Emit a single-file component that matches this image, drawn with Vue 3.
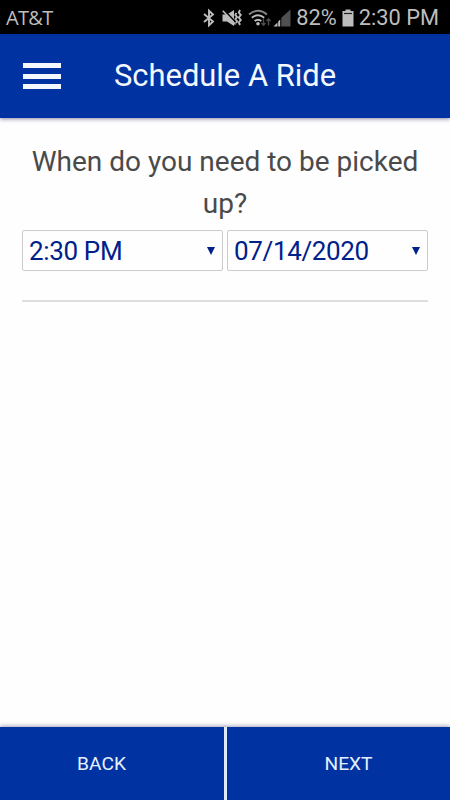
<template>
  <div class="phone">
    <div class="status-bar">
      <span class="carrier">AT&amp;T</span>
      <div class="status-icons">
        <svg class="icon-bt" width="12" height="20" viewBox="0 0 12 20">
          <path d="M1 6 L10 13.5 L6 17.3 V2.7 L10 6.5 L1 14" />
        </svg>
        <svg class="icon-mute" width="20" height="20" viewBox="0 0 20 20">
          <path class="fill" d="M0.5 6.5 H5 L12 2 V18 L5 13.5 H0.5 Z" />
          <path class="slash" d="M2.5 2.5 L14 14.5" />
          <path class="bar" d="M0.8 2.8 L13.5 16.5" />
          <path class="line" d="M14.2 5 L13.4 7 L15 9 L13.4 11 L15 13 L14 15 M18 2 L16.8 4.5 L18.8 7 L16.8 9.5 L18.8 12 L16.8 14.5 L18 17" />
        </svg>
        <svg class="icon-wifi" width="24" height="20" viewBox="0 0 24 20">
          <path class="line soft" d="M1 6.5 Q10 -0.8 19 6.5" />
          <path class="line" d="M3.8 9.8 Q10 4.8 16.2 9.8 M6.6 13 Q10 10.4 13.4 13" />
          <circle cx="10" cy="15.8" r="1.8" />
          <path class="dim" d="M15.5 10.5 V17 M13.5 15 L15.5 17.3 L17.5 15 M20.5 17.5 V10.5 M18.5 13 L20.5 10.7 L22.5 13" />
        </svg>
        <svg class="icon-signal" width="18" height="18" viewBox="0 0 18 18">
          <path class="off" d="M8.3 8.8 L17.5 0.5 V17.5 H8.3 Z" />
          <path class="on" d="M0.5 17.5 L4.5 13.5 V17.5 Z M5.2 12.5 L7.2 10.5 V17.5 H5.2 Z" />
        </svg>
        <span class="percent">82%</span>
        <svg class="icon-battery" width="12" height="18" viewBox="0 0 12 18">
          <path class="body" d="M3.5 0.5 H8.5 V2 H11.5 V17.5 H0.5 V2 H3.5 Z" />
          <path class="level" d="M2 4.5 H10" />
        </svg>
        <span class="clock">{{ time }}</span>
      </div>
    </div>

    <header class="app-bar">
      <button class="menu-btn" aria-label="Menu">
        <span></span>
        <span></span>
        <span></span>
      </button>
      <h1>Schedule A Ride</h1>
    </header>

    <main class="content">
      <h2>When do you need to be picked up?</h2>
      <div class="fields">
        <button v-for="f in fields" :key="f.name" class="field">
          <span>{{ f.value }}</span>
          <svg width="10" height="8" viewBox="0 0 10 8"><path d="M1 0 H9 L5 8 Z" /></svg>
        </button>
      </div>
      <hr />
    </main>

    <footer class="actions">
      <button class="btn-back"><span>BACK</span></button>
      <button class="btn-next"><span>NEXT</span></button>
    </footer>
  </div>
</template>

<script setup>
import { ref, reactive } from 'vue';

const time = ref('2:30 PM');

const fields = reactive([
    { name: 'time', value: '2:30 PM' },
    { name: 'date', value: '07/14/2020' }
]);
</script>

<style>
body { margin: 0; background: #fefefe; }
</style>

<style scoped>
.phone { display: flex; flex-direction: column; height: 800px; width: 450px; overflow: hidden; background: #fefefe; font-family: Roboto, "Liberation Sans", sans-serif; }
button { font-family: inherit; border: none; padding: 0; cursor: pointer; }

.status-bar { display: flex; justify-content: space-between; align-items: center; height: 34px; flex: none; padding: 1px 11px 0 6px; box-sizing: border-box; background: #000; color: #bdbdbd; font-size: 21.8px; white-space: nowrap; }
.carrier { font-family: "Open Sans", "Noto Sans", sans-serif; font-size: 20px; font-weight: 500; letter-spacing: -0.7px; }
.status-icons { display: flex; align-items: center; }
.status-icons svg { flex: none; }
.icon-bt { margin-right: 7px; fill: none; stroke: #bdbdbd; stroke-width: 1.9; }
.icon-mute { margin-right: 6px; }
.fill { fill: #bdbdbd; }
.slash { fill: none; stroke: #000; stroke-width: 1.6; }
.bar { fill: none; stroke: #bdbdbd; stroke-width: 1.6; }
.line { fill: none; stroke: #bdbdbd; stroke-width: 1.9; }
.soft { stroke: #858585; }
.icon-wifi { margin-right: 1px; fill: #bdbdbd; }
.dim { fill: none; stroke: #4c4c4c; stroke-width: 1.4; }
.icon-signal { margin-right: 5px; }
.off { fill: #505050; }
.on { fill: #bdbdbd; }
.percent { margin-right: 5px; }
.icon-battery { margin-right: 5px; }
.body { fill: #bdbdbd; }
.level { stroke: #222; stroke-width: 1.2; }

.app-bar { display: flex; align-items: center; height: 84px; flex: none; padding-left: 23px; background: #0033a1; box-shadow: 0 1px 4px rgba(20,20,80,0.5); }
.menu-btn { display: flex; flex-direction: column; gap: 5.5px; width: 38px; margin-right: 53px; background: none; }
.menu-btn span { height: 5px; background: #f4f8ff; }
h1 { margin: 0 0 1px; font-size: 30.9px; font-weight: 400; color: #f4f8ff; white-space: nowrap; }

.content { flex: 1; padding: 23px 22px 0; }
h2 { margin: 0 0 5px; font-size: 28px; line-height: 42px; font-weight: 400; color: #4a4a4a; text-align: center; }
.fields { display: flex; gap: 4px; }
.field { display: flex; flex: 1; justify-content: space-between; align-items: center; height: 41px; padding: 0 6px; box-sizing: border-box; border: 1px solid #ccc; border-radius: 2px; background: #fefefe; color: #00208a; font-size: 26px; letter-spacing: -0.35px; }
.field svg { fill: #00208a; }
hr { margin: 29px 0 0; border: none; height: 2px; background: #dedede; }

.actions { display: flex; gap: 3px; height: 73px; flex: none; background: #dfe8f8; box-shadow: 0 -1px 4px rgba(20,20,80,0.4); }
.actions button { flex: 1; background: #0033a1; color: #e4f0ff; font-size: 19.2px; }
.actions .btn-back { padding-right: 21px; }
.actions .btn-next { padding-left: 20px; }
</style>
